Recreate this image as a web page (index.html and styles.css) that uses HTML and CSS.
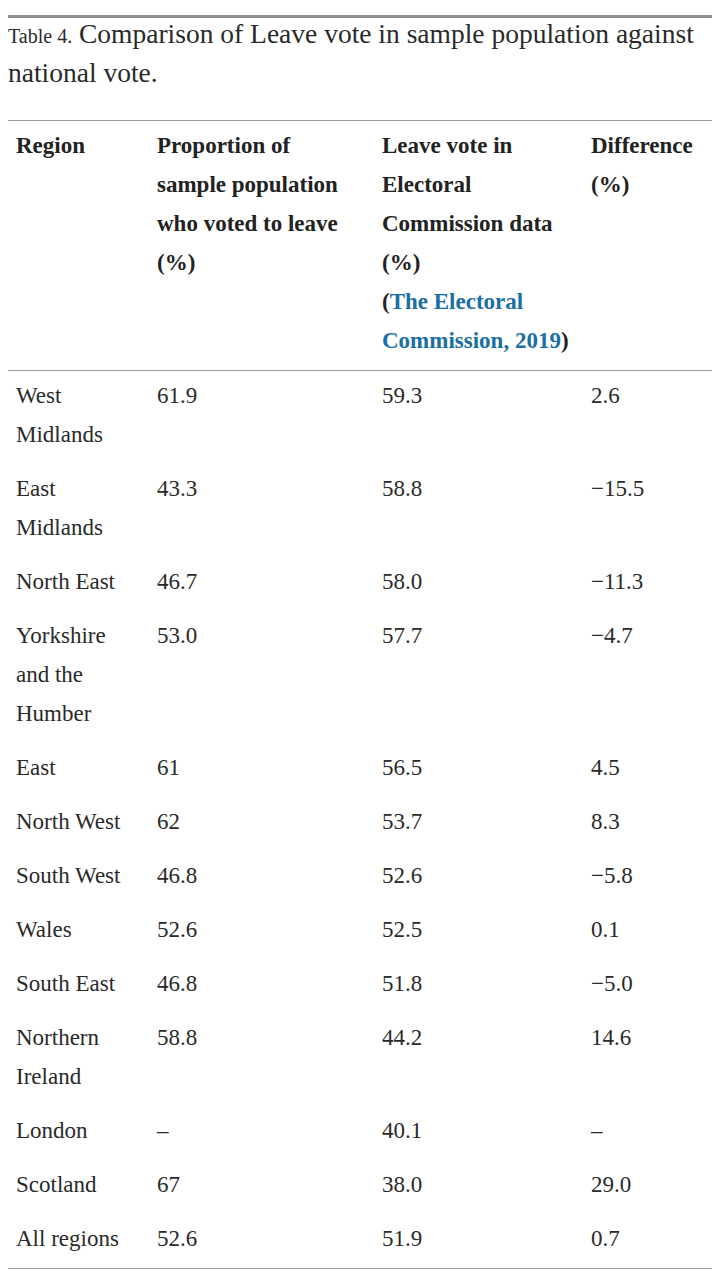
FILE: index.html
```html
<!DOCTYPE html>
<html lang="en">
<head>
<meta charset="utf-8">
<title>Table 4</title>
<link rel="stylesheet" href="styles.css">
</head>
<body>
<div class="wrap">
  <div class="caption"><span class="label">Table 4.</span> Comparison of Leave vote in sample population against national vote.</div>
  <table class="data">
    <colgroup>
      <col class="c1"><col class="c2"><col class="c3"><col class="c4">
    </colgroup>
    <thead>
      <tr>
        <th>Region</th>
        <th>Proportion of<br>sample population<br>who voted to leave<br>(%)</th>
        <th>Leave vote in<br>Electoral<br>Commission data<br>(%)<br>(<a href="#">The Electoral<br>Commission, 2019</a>)</th>
        <th>Difference<br>(%)</th>
      </tr>
    </thead>
    <tbody>
      <tr><td>West Midlands</td><td>61.9</td><td>59.3</td><td>2.6</td></tr>
      <tr><td>East Midlands</td><td>43.3</td><td>58.8</td><td>−15.5</td></tr>
      <tr><td>North East</td><td>46.7</td><td>58.0</td><td>−11.3</td></tr>
      <tr><td>Yorkshire and the Humber</td><td>53.0</td><td>57.7</td><td>−4.7</td></tr>
      <tr><td>East</td><td>61</td><td>56.5</td><td>4.5</td></tr>
      <tr><td>North West</td><td>62</td><td>53.7</td><td>8.3</td></tr>
      <tr><td>South West</td><td>46.8</td><td>52.6</td><td>−5.8</td></tr>
      <tr><td>Wales</td><td>52.6</td><td>52.5</td><td>0.1</td></tr>
      <tr><td>South East</td><td>46.8</td><td>51.8</td><td>−5.0</td></tr>
      <tr><td>Northern Ireland</td><td>58.8</td><td>44.2</td><td>14.6</td></tr>
      <tr><td>London</td><td>–</td><td>40.1</td><td>–</td></tr>
      <tr><td>Scotland</td><td>67</td><td>38.0</td><td>29.0</td></tr>
      <tr><td>All regions</td><td>52.6</td><td>51.9</td><td>0.7</td></tr>
    </tbody>
  </table>
</div>
</body>
</html>
```

FILE: styles.css
```css
html, body {
  margin: 0;
  padding: 0;
  background: #ffffff;
}
body {
  font-family: "Liberation Serif", "Times New Roman", serif;
  color: #222222;
}
.wrap {
  margin: 15px 12px 0 8px;
  border-top: 3px solid #8e8e8e;
}
.caption {
  font-size: 27.5px;
  line-height: 39px;
  color: #2a2a2a;
  margin-top: -4px;
  margin-bottom: 28px;
}
.caption .label {
  font-size: 20px;
  line-height: 1;
}
.data {
  width: 100%;
  table-layout: fixed;
  border-collapse: collapse;
  border-top: 1px solid #9a9a9a;
  border-bottom: 1px solid #9a9a9a;
  font-size: 23px;
  line-height: 39px;
}
.c1 { width: 141px; }
.c2 { width: 225px; }
.c3 { width: 209px; }
.c4 { width: auto; }
.data th, .data td {
  text-align: left;
  vertical-align: top;
  padding: 5px 8px 10px 8px;
}
.data th {
  font-weight: bold;
  color: #222222;
}
.data thead tr {
  border-bottom: 1px solid #9a9a9a;
}
.data td {
  font-weight: normal;
  color: #2a2a2a;
}
.data a {
  color: #1a6fa3;
  text-decoration: none;
}
```
